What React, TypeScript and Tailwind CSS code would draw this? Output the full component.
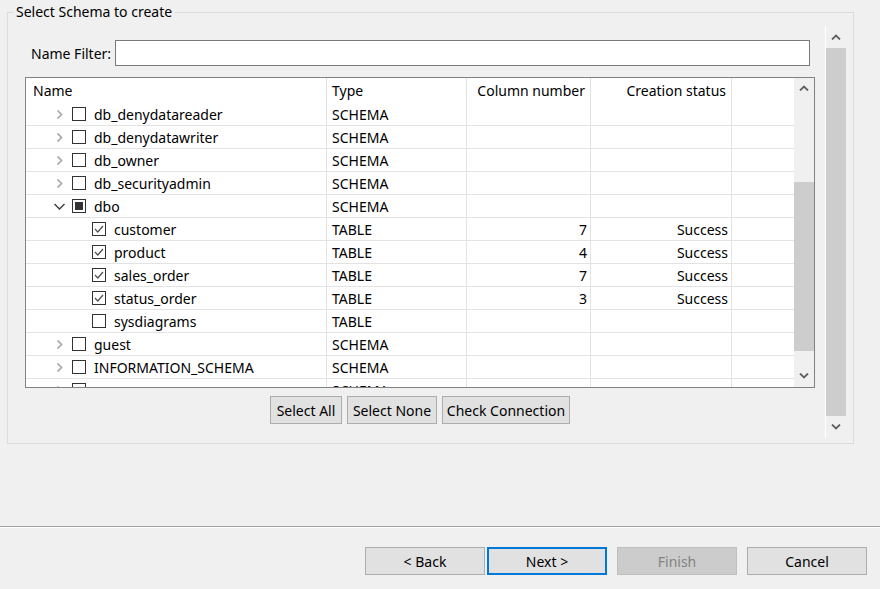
import React from 'react';

type Row = {
  name: string;
  type: string;
  level: number;
  expand?: 'open' | 'closed';
  check: 'none' | 'checked' | 'partial';
  cols?: string;
  status?: string;
};

const rows: Row[] = [
  { name: 'db_denydatareader', type: 'SCHEMA', level: 0, expand: 'closed', check: 'none' },
  { name: 'db_denydatawriter', type: 'SCHEMA', level: 0, expand: 'closed', check: 'none' },
  { name: 'db_owner', type: 'SCHEMA', level: 0, expand: 'closed', check: 'none' },
  { name: 'db_securityadmin', type: 'SCHEMA', level: 0, expand: 'closed', check: 'none' },
  { name: 'dbo', type: 'SCHEMA', level: 0, expand: 'open', check: 'partial' },
  { name: 'customer', type: 'TABLE', level: 1, check: 'checked', cols: '7', status: 'Success' },
  { name: 'product', type: 'TABLE', level: 1, check: 'checked', cols: '4', status: 'Success' },
  { name: 'sales_order', type: 'TABLE', level: 1, check: 'checked', cols: '7', status: 'Success' },
  { name: 'status_order', type: 'TABLE', level: 1, check: 'checked', cols: '3', status: 'Success' },
  { name: 'sysdiagrams', type: 'TABLE', level: 1, check: 'none' },
  { name: 'guest', type: 'SCHEMA', level: 0, expand: 'closed', check: 'none' },
  { name: 'INFORMATION_SCHEMA', type: 'SCHEMA', level: 0, expand: 'closed', check: 'none' },
  { name: 'sys', type: 'SCHEMA', level: 0, expand: 'closed', check: 'none' },
];

function Chevron({ dir, className }: { dir: 'up' | 'down'; className?: string }) {
  return (
    <svg width="10" height="6" viewBox="0 0 10 6" className={className}>
      <polyline
        points={dir === 'up' ? '1,5.5 5,1.5 9,5.5' : '1,0.5 5,4.5 9,0.5'}
        fill="none"
        stroke="#606060"
        strokeWidth="1.8"
      />
    </svg>
  );
}

function TreeToggle({ state }: { state?: 'open' | 'closed' }) {
  if (state === 'closed') {
    return (
      <svg width="7" height="9" viewBox="0 0 7 9">
        <polyline points="1.5,0.5 5.5,4.5 1.5,8.5" fill="none" stroke="#a6a6a6" strokeWidth="1.6" />
      </svg>
    );
  }
  if (state === 'open') {
    return (
      <svg width="11" height="7" viewBox="0 0 11 7">
        <polyline points="0.5,1 5.5,6 10.5,1" fill="none" stroke="#404040" strokeWidth="1.5" />
      </svg>
    );
  }
  return null;
}

function CheckBox({ state }: { state: Row['check'] }) {
  return (
    <div className="w-[14px] h-[14px] border border-[#333333] bg-white flex items-center justify-center shrink-0">
      {state === 'checked' && (
        <svg width="12" height="12" viewBox="0 0 12 12">
          <polyline points="2,6 4.8,9 10,3" fill="none" stroke="#4d4d4d" strokeWidth="1.2" />
        </svg>
      )}
      {state === 'partial' && <div className="w-[8px] h-[8px] bg-[#333333]" />}
    </div>
  );
}

function TableRow({ row }: { row: Row }) {
  return (
    <div className="flex h-[23px] shrink-0 border-b border-[#e3e3e3]">
      <div
        className={`w-[301px] border-r border-[#e3e3e3] flex items-center ${
          row.level === 0 ? 'pl-[26px]' : 'pl-[46px]'
        }`}
      >
        <div className="w-[20px] pr-[6px] flex items-center justify-center">
          {row.level === 0 && <TreeToggle state={row.expand} />}
        </div>
        <CheckBox state={row.check} />
        <span className="ml-[8px] whitespace-nowrap">{row.name}</span>
      </div>
      <div className="w-[140px] border-r border-[#e3e3e3] flex items-center pl-[5px]">
        {row.type}
      </div>
      <div className="w-[124px] border-r border-[#e3e3e3] flex items-center justify-end pr-[3px]">
        {row.cols}
      </div>
      <div className="w-[141px] border-r border-[#e3e3e3] flex items-center justify-end pr-[3px]">
        {row.status}
      </div>
      <div className="flex-1" />
    </div>
  );
}

function SmallButton({ label, width }: { label: string; width: string }) {
  return (
    <button
      className={`${width} h-[28px] bg-[#e1e1e1] border border-[#adadad] text-black flex items-center justify-center whitespace-nowrap`}
    >
      {label}
    </button>
  );
}

export default function App() {
  return (
    <div
      className="w-[880px] h-[589px] bg-[#f0f0f0] flex flex-col text-[14px] text-black overflow-hidden"
      style={{ fontFamily: '"Segoe UI", "Noto Sans", sans-serif' }}
    >
      {/* main content */}
      <div className="h-[526px] shrink-0">
        <fieldset className="ml-[7px] mt-[2px] w-[847px] border border-[#dcdcdc]">
          <legend className="ml-[5px] px-[3px] leading-[20px]">Select Schema to create</legend>
          <div className="flex">
            <div className="w-[807px] pl-[17px] pt-[18px]">
              {/* name filter */}
              <div className="flex items-center h-[26px] pl-[6px] pr-[5px]">
                <label className="w-[84px] whitespace-nowrap">Name Filter:</label>
                <input
                  type="text"
                  className="flex-1 h-[26px] bg-white border border-[#7a7a7a] outline-none px-1"
                />
              </div>

              {/* tree table */}
              <div className="mt-[11px] w-[790px] h-[311px] border border-[#828282] bg-white flex">
                <div className="flex-1 flex flex-col overflow-hidden">
                  <div className="flex h-[25px] shrink-0">
                    <div className="w-[301px] border-r border-[#e3e3e3] flex items-center pl-[7px]">Name</div>
                    <div className="w-[140px] border-r border-[#e3e3e3] flex items-center pl-[5px]">Type</div>
                    <div className="w-[124px] border-r border-[#e3e3e3] flex items-center justify-end pr-[5px]">
                      Column number
                    </div>
                    <div className="w-[141px] border-r border-[#e3e3e3] flex items-center justify-end pr-[5px]">
                      Creation status
                    </div>
                    <div className="flex-1" />
                  </div>
                  {rows.map((row) => (
                    <TableRow key={row.name} row={row} />
                  ))}
                </div>
                {/* inner scrollbar */}
                <div className="w-[20px] bg-[#f0f0f0] flex flex-col items-center">
                  <div className="h-[18px] flex items-center justify-center pt-[2px]">
                    <Chevron dir="up" />
                  </div>
                  <div className="mt-[86px] w-full h-[169px] bg-[#cdcdcd]" />
                  <div className="flex-1" />
                  <div className="h-[18px] flex items-center justify-center pb-[4px]">
                    <Chevron dir="down" />
                  </div>
                </div>
              </div>

              {/* table actions */}
              <div className="mt-[8px] flex justify-center gap-[5px]">
                <SmallButton label="Select All" width="w-[72px]" />
                <SmallButton label="Select None" width="w-[90px]" />
                <SmallButton label="Check Connection" width="w-[128px]" />
              </div>
            </div>

            {/* outer scrollbar */}
            <div className="ml-[10px] mt-[4px] mb-[5px] w-[21px] h-[412px] border-l border-white flex flex-col">
              <div className="h-[22px] flex items-center justify-center">
                <Chevron dir="up" />
              </div>
              <div className="flex-1 bg-[#cdcdcd]" />
              <div className="h-[22px] flex items-center justify-center">
                <Chevron dir="down" />
              </div>
            </div>
          </div>
        </fieldset>
      </div>

      {/* footer */}
      <div className="flex-1 border-t border-[#a0a0a0]">
        <div className="h-full border-t border-white flex justify-end items-start pt-[19px] pr-[13px]">
          <button className="w-[120px] h-[28px] bg-[#e1e1e1] border border-[#adadad]">&lt; Back</button>
          <button className="ml-[2px] w-[120px] h-[28px] bg-[#e1e1e1] border-2 border-[#0078d7]">Next &gt;</button>
          <button className="ml-[10px] w-[120px] h-[28px] bg-[#cccccc] border border-[#bfbfbf] text-[#838383]">
            Finish
          </button>
          <button className="ml-[10px] w-[120px] h-[28px] bg-[#e1e1e1] border border-[#adadad]">Cancel</button>
        </div>
      </div>
    </div>
  );
}
